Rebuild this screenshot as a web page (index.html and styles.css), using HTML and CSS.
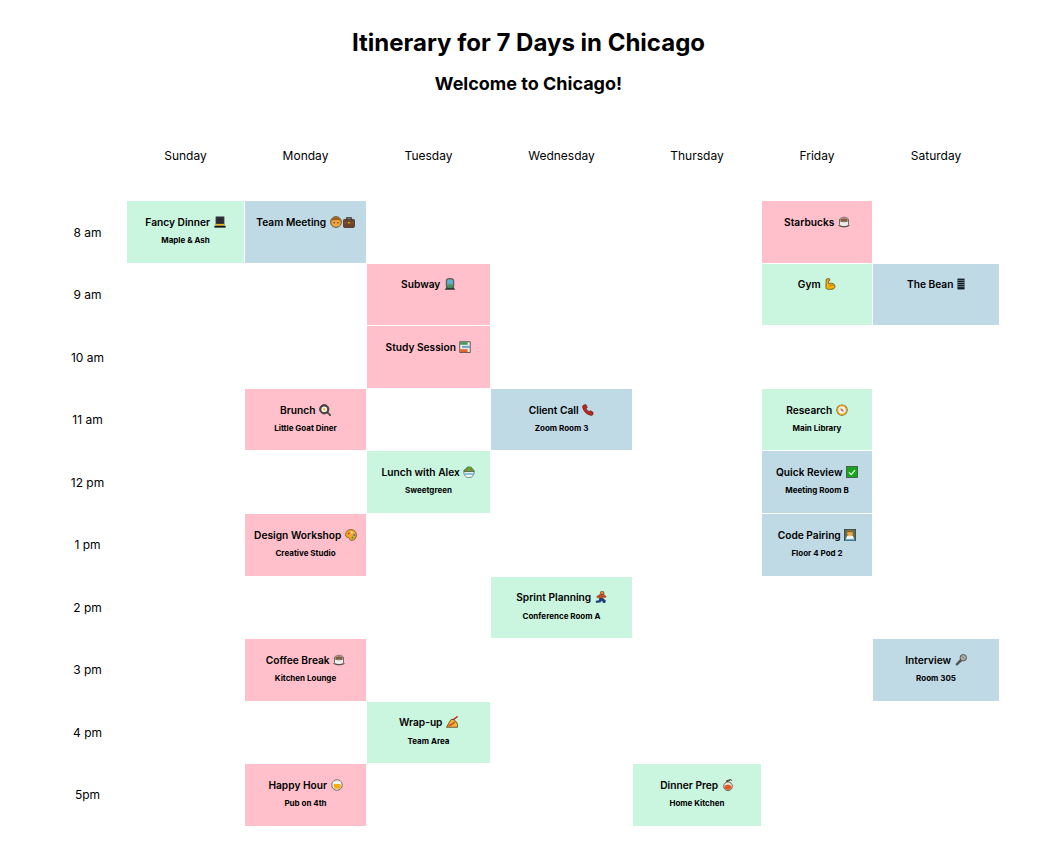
FILE: index.html
```html
<!DOCTYPE html>
<html lang="en">
<head>
  <meta charset="UTF-8">
  <title>Itinerary for 7 Days in Chicago</title>
  <link rel="stylesheet" href="styles.css">
</head>
<body>
  <!-- Emoji sprites -->
  <svg class="sprites" xmlns="http://www.w3.org/2000/svg">
    <symbol id="hat" viewBox="0 0 16 16">
      <path d="M2.500 1h11v11h-11z" fill="#2a2a30" stroke="#55555c" stroke-width=".8"/>
      <path d="M2.500 10.500h11v2h-11z" fill="#f4b400"/>
      <path d="M.5 13h15v2.500H.5z" fill="#141414"/>
    </symbol>
    <symbol id="person" viewBox="0 0 16 16">
      <circle cx="8" cy="8" r="7.200" fill="#f2a63c" stroke="#3d3a36" stroke-width="1"/>
      <path d="M1.500 7C2.500 3 5 1.200 8 1.200S13.500 3 14.500 7C12 5 10 5 8 5.500S4 5 1.500 7z" fill="#a0611f"/>
      <circle cx="5.500" cy="9" r=".9" fill="#3a2a1a"/>
      <circle cx="10.500" cy="9" r=".9" fill="#3a2a1a"/>
    </symbol>
    <symbol id="case" viewBox="0 0 16 16">
      <path d="M5 5V2.500h6V5" fill="none" stroke="#3a2a22" stroke-width="1.500"/>
      <rect x=".6" y="4.500" width="14.800" height="10.800" rx="1.500" fill="#6f4329" stroke="#3a2a22"/>
      <path d="M1 9h14" stroke="#8d5a38"/>
      <path d="M7 8h2v2H7z" fill="#f4b400"/>
    </symbol>
    <symbol id="train" viewBox="0 0 16 16">
      <path d="M1 15.500l2.500-3.500h9l2.500 3.500z" fill="#2f3a36"/>
      <rect x="3" y=".8" width="10" height="12.500" rx="3" fill="#7f8f8c" stroke="#2f3a36"/>
      <rect x="4.500" y="2.800" width="7" height="5" rx="1" fill="#56b4d6"/>
      <path d="M4 9h8v3.500H4z" fill="#3f9a5c"/>
    </symbol>
    <symbol id="books" viewBox="0 0 16 16">
      <path d="M1 1h14v14.300H1z" fill="#f4f1e6" stroke="#33302c"/>
      <path d="M1.500 1.500h10v3.500h-10z" fill="#3f9a5c"/>
      <path d="M4 6.300h10.500v3.200H4z" fill="#79a9c9"/>
      <path d="M1.500 11h10v3.800h-10z" fill="#e2662a"/>
    </symbol>
    <symbol id="coffee" viewBox="0 0 16 16">
      <path d="M2 5h12v6c0 2-2.500 3-6 3s-6-1-6-3z" fill="#f0eeea" stroke="#4a4540"/>
      <ellipse cx="8" cy="5" rx="6" ry="2.700" fill="#f0eeea" stroke="#4a4540"/>
      <ellipse cx="8" cy="5" rx="5" ry="2" fill="#8b5a3c"/>
      <path d="M.5 12c1.500 3.200 13.500 3.200 15 0" fill="none" stroke="#4a4540" stroke-width="1.300"/>
      <path d="M6.500 2c0-1 1-1 1-1.800M10 2.200c0-1 1-1 1-1.800" stroke="#8a8480" fill="none" stroke-width=".8"/>
    </symbol>
    <symbol id="arm" viewBox="0 0 16 16">
      <path d="M3 1.500l4-.8 1 2.300-2 1.200.5 4C8 6.500 12 6.500 14 9c1.500 2.500 0 6-3 6H4.500C3 15 2.500 13 2.500 11z" fill="#f4b400" stroke="#5a4320"/>
      <path d="M8 11c1-1.500 3-2 4.500-1" fill="none" stroke="#5a4320" stroke-width=".8"/>
    </symbol>
    <symbol id="bars" viewBox="0 0 10 16">
      <path d="M.3 .8h9.400v14.400H.3z" fill="#10181f"/>
      <path d="M.3 3.200h9.400M.3 6h9.400M.3 8.800h9.400M.3 11.600h9.400" stroke="#9ab2ba" stroke-width=".9"/>
    </symbol>
    <symbol id="pan" viewBox="0 0 16 16">
      <path d="M10.500 10.500l4.500 4.500" stroke="#55504c" stroke-width="2.400" stroke-linecap="round"/>
      <circle cx="7" cy="7" r="6.200" fill="#4c4a48" stroke="#2c2a28"/>
      <circle cx="7" cy="7" r="3.800" fill="#f4f2ec"/>
      <circle cx="7" cy="7" r="1.500" fill="#f4b400"/>
    </symbol>
    <symbol id="phone" viewBox="0 0 16 16">
      <path d="M2 1.500l3-.7 2 3.700-1.500 1.500c.8 2 2 3.200 4 4.200L11 9l3.800 2.200-.5 3c-.3.800-1.500 1.200-2.800.8C6.500 14 2.500 10 1 5c-.3-1.500.2-3 1-3.500z" fill="#c4261d" stroke="#5a1a14"/>
    </symbol>
    <symbol id="compass" viewBox="0 0 16 16">
      <circle cx="8" cy="8" r="7.500" fill="#6a4c1c"/>
      <circle cx="8" cy="8" r="6" fill="#f6efe0" stroke="#eca21e" stroke-width="1.800"/>
      <path d="M5.500 5.500L9 7l1.500 3.500L7 9z" fill="#a56f68"/>
    </symbol>
    <symbol id="salad" viewBox="0 0 16 16">
      <path d="M1.500 8C.5 5.500 2.500 4 4 4.200 4.500 1.800 7 .5 8.500 1.500c2-.8 4 .8 3.800 2.700 2-.2 3.200 2 2.200 3.800z" fill="#5ab03c" stroke="#2a4a24" stroke-width=".8"/>
      <circle cx="5" cy="5.500" r="1.200" fill="#e2462a"/>
      <circle cx="10.500" cy="4.800" r="1.200" fill="#e2462a"/>
      <path d="M1 7.500h14c0 4-2 8-7 8s-7-4-7-8z" fill="#f4f6f6" stroke="#3c4446" stroke-width=".8"/>
      <path d="M1.500 9.500h13l-.6 2H2.100z" fill="#62b4d4"/>
    </symbol>
    <symbol id="check" viewBox="0 0 16 16">
      <rect x=".6" y=".6" width="14.800" height="14.800" fill="#16a51c" stroke="#3a4a3c"/>
      <path d="M4 8.500l3 3 5-6" fill="none" stroke="#e8f6e0" stroke-width="1.800"/>
    </symbol>
    <symbol id="palette" viewBox="0 0 16 16">
      <path d="M8 .8C3.500 .8.700 4 .7 7.500S3.500 11 5 11.500s1 3.800 3.500 3.800C13 15.300 15.300 11.500 15.300 8S12.500 .8 8 .8z" fill="#f4aa24" stroke="#6a4c1c"/>
      <circle cx="5" cy="6" r="1.400" fill="#d6402a"/>
      <circle cx="9" cy="4.500" r="1.400" fill="#e8e4d0"/>
      <circle cx="12.300" cy="8" r="1.400" fill="#3f6fc4"/>
      <circle cx="10" cy="11.500" r="1.400" fill="#3f9a5c"/>
    </symbol>
    <symbol id="coder" viewBox="0 0 16 16">
      <rect x=".5" y=".5" width="15" height="15" fill="#55705a" stroke="#333c36"/>
      <circle cx="8" cy="5.500" r="3.800" fill="#f2a63c"/>
      <path d="M4.200 5C4.500 2.500 6 1.500 8 1.500S11.500 2.500 11.800 5C10 3.500 6 3.500 4.200 5z" fill="#9a5a1c"/>
      <path d="M2.500 14l1.500-5h8l1.500 5z" fill="#f2f2f2"/>
      <path d="M1 14h14v1.500H1z" fill="#3f9bc4"/>
    </symbol>
    <symbol id="runner" viewBox="0 0 16 16">
      <circle cx="9.500" cy="2.700" r="2.500" fill="#e88a2c" stroke="#3a2410" stroke-width=".7"/>
      <path d="M5.500 5l6-.8 3.500 3.300-1.500 1.500-2.500-1.500-.5 3.500-5 0 .5-3.500-2.500 1.800-1.500-1.500z" fill="#cf4a26" stroke="#3a2410" stroke-width=".5"/>
      <path d="M6 10l-.5 2.700-4 .5v2.300l6-.7 1-2.300 2 1.500v1.500h3l.5-3-3.500-2.500z" fill="#173f8c" stroke="#101c3c" stroke-width=".5"/>
    </symbol>
    <symbol id="mic" viewBox="0 0 16 16">
      <path d="M8 6l-7 7.500 1.500 1.800 7.500-7z" fill="#55524f" stroke="#2a2a2a" stroke-width=".6"/>
      <circle cx="11" cy="5" r="4.300" fill="#b0aeaa" stroke="#3c3a38"/>
      <path d="M8.800 2.800l4.400 4.400" stroke="#6a6866"/>
    </symbol>
    <symbol id="writing" viewBox="0 0 16 16">
      <path d="M15.500 .5L7.500 6.500" stroke="#c4261d" stroke-width="1.800"/>
      <path d="M.5 15L6.500 5c2-1.200 5 0 6.500 2l2.500 4v4z" fill="#f4b636" stroke="#4a3414"/>
      <path d="M3.500 13.500c2.500-1.500 6-3.500 8.500-5.500" stroke="#e0561e" stroke-width="2.400" fill="none"/>
    </symbol>
    <symbol id="beers" viewBox="0 0 16 16">
      <circle cx="8" cy="8" r="7" fill="#f6f4ee" stroke="#4a4640"/>
      <path d="M4 6.500h8.500c1 2 1 4.500-.5 6.500H5c-1.500-2-2-4.500-1-6.500z" fill="#f4ae1c"/>
      <path d="M2 4.500c3-2.500 9-2.500 12 0" fill="none" stroke="#d8d4cc"/>
    </symbol>
    <symbol id="pot" viewBox="0 0 16 16">
      <path d="M5 4.500l6.500-3.500 2 1M5.500 2.500l6-1.800" fill="none" stroke="#4a3a30" stroke-width="1.300"/>
      <circle cx="8" cy="9.700" r="5.800" fill="#f1e4d4" stroke="#4a3a30"/>
      <path d="M3.200 10c2-3 7-3 9.600 0 0 2.500-2.200 4.500-4.800 4.500S3.200 12.500 3.200 10z" fill="#e2561e"/>
    </symbol>
  </svg>

  <h1>Itinerary for 7 Days in Chicago</h1>
  <h2>Welcome to Chicago!</h2>

  <div class="schedule">
    <div class="corner"></div>
    <div class="day">Sunday</div>
    <div class="day">Monday</div>
    <div class="day">Tuesday</div>
    <div class="day">Wednesday</div>
    <div class="day">Thursday</div>
    <div class="day">Friday</div>
    <div class="day">Saturday</div>

    <!-- 8 am -->
    <div class="time">8 am</div>
    <div class="event green"><b>Fancy Dinner <svg class="emoji"><use href="#hat"/></svg></b><small>Maple &amp; Ash</small></div>
    <div class="event blue"><b>Team Meeting <svg class="emoji"><use href="#person"/></svg><svg class="emoji"><use href="#case"/></svg></b></div>
    <div></div><div></div><div></div>
    <div class="event pink"><b>Starbucks <svg class="emoji"><use href="#coffee"/></svg></b></div>
    <div></div>

    <!-- 9 am -->
    <div class="time">9 am</div>
    <div></div><div></div>
    <div class="event pink"><b>Subway <svg class="emoji"><use href="#train"/></svg></b></div>
    <div></div><div></div>
    <div class="event green"><b>Gym <svg class="emoji"><use href="#arm"/></svg></b></div>
    <div class="event blue"><b>The Bean <svg class="emoji narrow"><use href="#bars"/></svg></b></div>

    <!-- 10 am -->
    <div class="time">10 am</div>
    <div></div><div></div>
    <div class="event pink"><b>Study Session <svg class="emoji"><use href="#books"/></svg></b></div>
    <div></div><div></div><div></div><div></div>

    <!-- 11 am -->
    <div class="time">11 am</div>
    <div></div>
    <div class="event pink"><b>Brunch <svg class="emoji"><use href="#pan"/></svg></b><small>Little Goat Diner</small></div>
    <div></div>
    <div class="event blue"><b>Client Call <svg class="emoji"><use href="#phone"/></svg></b><small>Zoom Room 3</small></div>
    <div></div>
    <div class="event green"><b>Research <svg class="emoji"><use href="#compass"/></svg></b><small>Main Library</small></div>
    <div></div>

    <!-- 12 pm -->
    <div class="time">12 pm</div>
    <div></div><div></div>
    <div class="event green"><b>Lunch with Alex <svg class="emoji"><use href="#salad"/></svg></b><small>Sweetgreen</small></div>
    <div></div><div></div>
    <div class="event blue"><b>Quick Review <svg class="emoji"><use href="#check"/></svg></b><small>Meeting Room B</small></div>
    <div></div>

    <!-- 1 pm -->
    <div class="time">1 pm</div>
    <div></div>
    <div class="event pink"><b>Design Workshop <svg class="emoji"><use href="#palette"/></svg></b><small>Creative Studio</small></div>
    <div></div><div></div><div></div>
    <div class="event blue"><b>Code Pairing <svg class="emoji"><use href="#coder"/></svg></b><small>Floor 4 Pod 2</small></div>
    <div></div>

    <!-- 2 pm -->
    <div class="time">2 pm</div>
    <div></div><div></div><div></div>
    <div class="event green"><b>Sprint Planning <svg class="emoji"><use href="#runner"/></svg></b><small>Conference Room A</small></div>
    <div></div><div></div><div></div>

    <!-- 3 pm -->
    <div class="time">3 pm</div>
    <div></div>
    <div class="event pink"><b>Coffee Break <svg class="emoji"><use href="#coffee"/></svg></b><small>Kitchen Lounge</small></div>
    <div></div><div></div><div></div><div></div>
    <div class="event blue"><b>Interview <svg class="emoji"><use href="#mic"/></svg></b><small>Room 305</small></div>

    <!-- 4 pm -->
    <div class="time">4 pm</div>
    <div></div><div></div>
    <div class="event green"><b>Wrap-up <svg class="emoji"><use href="#writing"/></svg></b><small>Team Area</small></div>
    <div></div><div></div><div></div><div></div>

    <!-- 5pm -->
    <div class="time">5pm</div>
    <div></div>
    <div class="event pink"><b>Happy Hour <svg class="emoji"><use href="#beers"/></svg></b><small>Pub on 4th</small></div>
    <div></div><div></div>
    <div class="event green"><b>Dinner Prep <svg class="emoji"><use href="#pot"/></svg></b><small>Home Kitchen</small></div>
    <div></div><div></div>
  </div>
</body>
</html>
```

FILE: styles.css
```css
body {
  font-family: Inter, "Noto Sans", sans-serif;
  margin: 0;
  padding: 28px 7px 0 0;
  background-color: #fff;
  color: #000;
}

.sprites {
  display: none;
}

h1 {
  font-size: 24px;
  font-weight: 700;
  line-height: 30px;
  margin: 0;
  text-align: center;
}

h2 {
  font-size: 18px;
  font-weight: 700;
  line-height: 22px;
  margin: 15px 0 0;
  text-align: center;
}

.schedule {
  display: grid;
  grid-template-columns: 77px 117px 121px 123px 141px 128px 110px 126px;
  grid-template-rows: 89px repeat(10, 61.55px);
  gap: 1px;
  margin: 0 0 0 49px;
  padding-top: 16.3px;
}

.day {
  font-size: 12px;
  text-align: center;
  align-self: center;
}

.time {
  font-size: 12px;
  text-align: center;
  align-self: center;
}

.event {
  text-align: center;
  padding-top: 13.6px;
}

.event b {
  display: block;
  font-size: 10.2px;
  font-weight: 600;
  line-height: 14px;
}

.event small {
  display: block;
  font-size: 8px;
  font-weight: 700;
  line-height: 10px;
  margin-top: 6.4px;
}

.emoji {
  width: 12px;
  height: 12px;
  margin-left: 1px;
  vertical-align: -2px;
}

.emoji.narrow {
  width: 8px;
}

.green {
  background-color: #caf5df;
}

.blue {
  background-color: #bfd9e5;
}

.pink {
  background-color: #ffc0cb;
}
```
